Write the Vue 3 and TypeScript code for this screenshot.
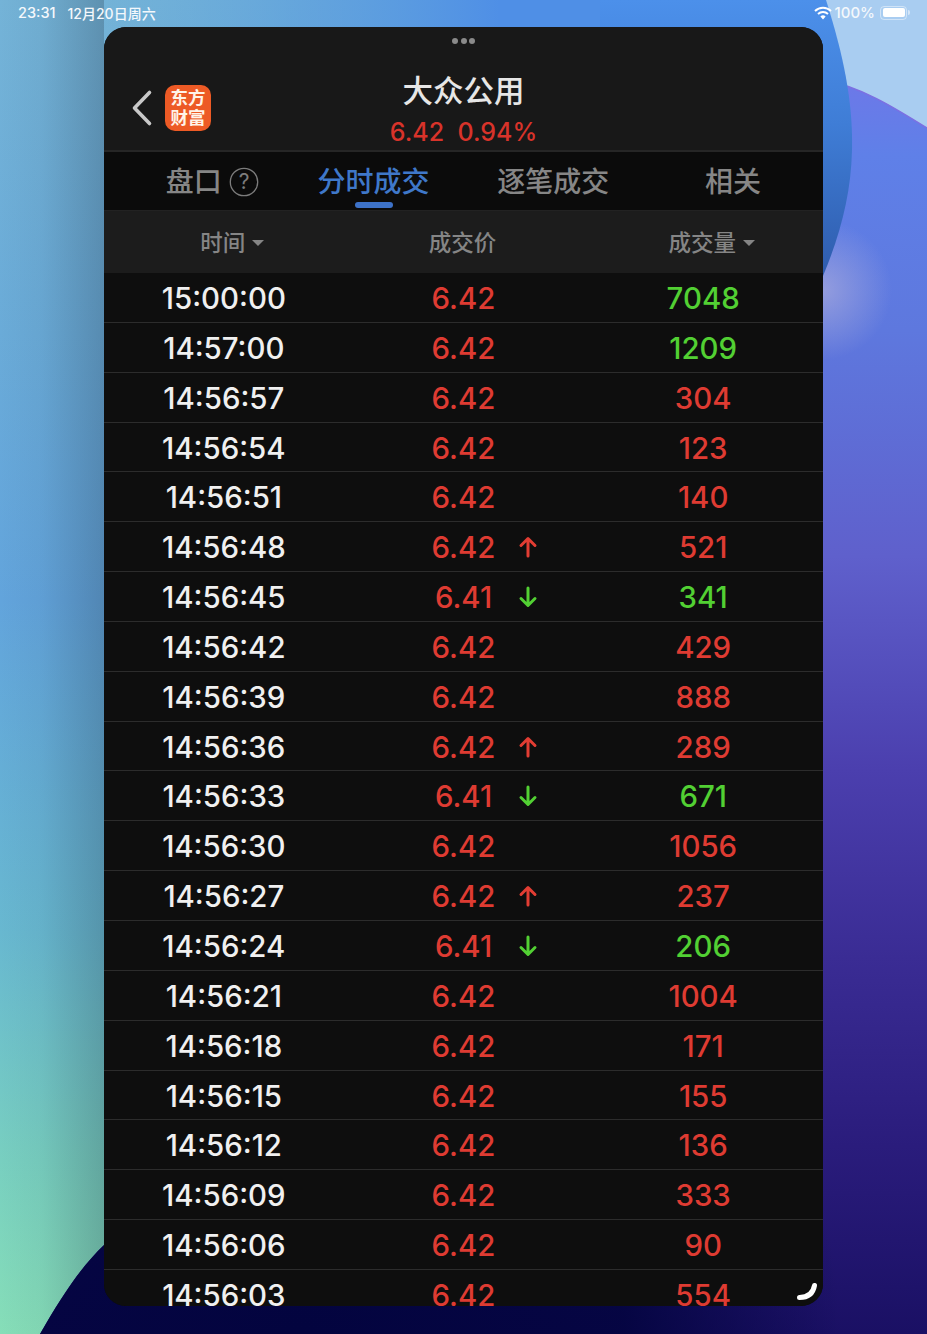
<script setup lang="ts">
type Dir = "up" | "down" | null;
type Trade = { time: string; price: string; vol: string; green?: boolean; dir?: Dir };

const tabs = ["盘口", "分时成交", "逐笔成交", "相关"];

const trades: Trade[] = [
  { time: "15:00:00", price: "6.42", vol: "7048", green: true },
  { time: "14:57:00", price: "6.42", vol: "1209", green: true },
  { time: "14:56:57", price: "6.42", vol: "304" },
  { time: "14:56:54", price: "6.42", vol: "123" },
  { time: "14:56:51", price: "6.42", vol: "140" },
  { time: "14:56:48", price: "6.42", vol: "521", dir: "up" },
  { time: "14:56:45", price: "6.41", vol: "341", green: true, dir: "down" },
  { time: "14:56:42", price: "6.42", vol: "429" },
  { time: "14:56:39", price: "6.42", vol: "888" },
  { time: "14:56:36", price: "6.42", vol: "289", dir: "up" },
  { time: "14:56:33", price: "6.41", vol: "671", green: true, dir: "down" },
  { time: "14:56:30", price: "6.42", vol: "1056" },
  { time: "14:56:27", price: "6.42", vol: "237", dir: "up" },
  { time: "14:56:24", price: "6.41", vol: "206", green: true, dir: "down" },
  { time: "14:56:21", price: "6.42", vol: "1004" },
  { time: "14:56:18", price: "6.42", vol: "171" },
  { time: "14:56:15", price: "6.42", vol: "155" },
  { time: "14:56:12", price: "6.42", vol: "136" },
  { time: "14:56:09", price: "6.42", vol: "333" },
  { time: "14:56:06", price: "6.42", vol: "90" },
  { time: "14:56:03", price: "6.42", vol: "554" },
];
</script>

<template>
  <div class="page">
    <svg class="wallpaper" viewBox="0 0 927 1334" preserveAspectRatio="none" aria-hidden="true">
      <defs>
        <linearGradient id="left" x1="0" y1="0" x2="0" y2="1">
          <stop offset="0" stop-color="#74b3d7" />
          <stop offset="0.25" stop-color="#6aabd8" />
          <stop offset="0.45" stop-color="#62a4dc" />
          <stop offset="0.7" stop-color="#68b8d0" />
          <stop offset="0.87" stop-color="#78cfc0" />
          <stop offset="1" stop-color="#86deb8" />
        </linearGradient>
        <linearGradient id="shade" x1="0" y1="0" x2="1" y2="0">
          <stop offset="0" stop-color="#203040" stop-opacity="0" />
          <stop offset="0.4" stop-color="#203040" stop-opacity="0.05" />
          <stop offset="1" stop-color="#203040" stop-opacity="0.26" />
        </linearGradient>
        <linearGradient id="top" x1="0" y1="0" x2="1" y2="0">
          <stop offset="0" stop-color="#5a9fdc" stop-opacity="0" />
          <stop offset="1" stop-color="#4f8fe6" />
        </linearGradient>
        <linearGradient id="disc" x1="0" y1="0" x2="0" y2="1">
          <stop offset="0" stop-color="#4c90ea" />
          <stop offset="0.45" stop-color="#3f7dd6" />
          <stop offset="1" stop-color="#2f5cad" />
        </linearGradient>
        <linearGradient id="dark" x1="0" y1="0" x2="0" y2="1">
          <stop offset="0" stop-color="#6d78e8" />
          <stop offset="0.06" stop-color="#5f80e8" />
          <stop offset="0.2" stop-color="#5e78de" />
          <stop offset="0.38" stop-color="#5f60cc" />
          <stop offset="0.55" stop-color="#4b3fae" />
          <stop offset="0.7" stop-color="#3a2c94" />
          <stop offset="0.85" stop-color="#2a1c7c" />
          <stop offset="1" stop-color="#1a1064" />
        </linearGradient>
        <radialGradient id="navy" gradientUnits="userSpaceOnUse" cx="300" cy="1334" r="540">
          <stop offset="0" stop-color="#03043f" />
          <stop offset="0.6" stop-color="#03043f" stop-opacity="0.9" />
          <stop offset="1" stop-color="#03043f" stop-opacity="0" />
        </radialGradient>
        <radialGradient id="glow" gradientUnits="userSpaceOnUse" cx="822" cy="290" r="70">
          <stop offset="0" stop-color="#b8b4dc" stop-opacity="0.6" />
          <stop offset="1" stop-color="#b8b4dc" stop-opacity="0" />
        </radialGradient>
      </defs>
      <rect width="927" height="1334" fill="url(#left)" />
      <rect width="104" height="1334" fill="url(#shade)" />
      <rect x="100" width="400" height="27" fill="url(#top)" />
      <rect x="500" width="427" height="300" fill="#4f8fe6" />
      <rect x="700" width="227" height="300" fill="#a9cdf1" />
      <path d="M40 1334 C62 1296 80 1268 104 1245 L104 700 C300 200 600 80 823 80 C860 86 895 108 927 128 V1334 Z" fill="url(#dark)" />
      <path d="M40 1334 C62 1296 80 1268 104 1245 L104 700 C300 200 600 80 823 80 C860 86 895 108 927 128 V1334 Z" fill="url(#navy)" />
      <path d="M823 80 C860 86 895 108 927 128" fill="none" stroke="#7c70e2" stroke-width="1.5" />
      <rect x="752" y="220" width="175" height="140" fill="url(#glow)" />
      <path d="M600 0 H826 C845 60 853 105 852 150 C851 195 840 235 823 276 L600 276 Z" fill="url(#disc)" />
    </svg>

    <div class="status">
      <span class="clock">23:31</span>
      <span class="date">12月20日周六</span>
      <span class="status-right">
        <svg class="wifi" width="18" height="14" viewBox="0 0 18 14">
          <path d="M1 5 A11.5 11.5 0 0 1 17 5" fill="none" stroke="#fff" stroke-width="2" />
          <path d="M4 8 A7.5 7.5 0 0 1 14 8" fill="none" stroke="#fff" stroke-width="2" />
          <path d="M9 13.5 L6.4 10.6 A3.6 3.6 0 0 1 11.6 10.6 Z" fill="#fff" />
        </svg>
        <span>100%</span>
        <span class="battery"><i></i></span>
        <span class="nub"></span>
      </span>
    </div>

    <div class="sheet">
      <div class="header">
        <div class="dots"><i></i><i></i><i></i></div>
        <svg class="back" width="24" height="38" viewBox="0 0 24 38">
          <path d="M19.5 3.5 L4.5 19 L19.5 34.5" fill="none" stroke="#c8c8c8" stroke-width="3.6" stroke-linecap="round" stroke-linejoin="round" />
        </svg>
        <div class="logo">东方<br />财富</div>
        <div class="title">大众公用</div>
        <div class="sub">6.42&nbsp;&nbsp;0.94%</div>
      </div>

      <div class="tabs">
        <div v-for="(t, i) in tabs" :key="t" class="tab" :class="{ active: i === 1 }">
          <span class="tab-text">
            {{ t }}
            <svg v-if="i === 0" class="help" width="30" height="30" viewBox="0 0 30 30">
              <circle cx="15" cy="15" r="13.7" fill="none" stroke="#7c7c7c" stroke-width="1.3" />
              <text x="15" y="22" text-anchor="middle" class="help-mark">?</text>
            </svg>
          </span>
          <i v-if="i === 1" class="bar"></i>
        </div>
      </div>

      <div class="cols">
        <div class="col"><span class="col-text">时间<i class="caret"></i></span></div>
        <div class="col"><span class="col-text">成交价</span></div>
        <div class="col"><span class="col-text">成交量<i class="caret"></i></span></div>
      </div>

      <div class="rows">
        <div v-for="t in trades" :key="t.time" class="row">
          <div class="cell time">{{ t.time }}</div>
          <div class="cell price">
            {{ t.price }}
            <svg v-if="t.dir" class="arrow" width="20" height="22" viewBox="0 0 20 22">
              <path
                v-if="t.dir === 'up'"
                d="M10 20 V3 M3 9.5 L10 2.5 L17 9.5"
                fill="none"
                stroke="#e23d33"
                stroke-width="3"
                stroke-linecap="round"
                stroke-linejoin="round"
              />
              <path
                v-else
                d="M10 2 V19 M3 12.5 L10 19.5 L17 12.5"
                fill="none"
                stroke="#52d033"
                stroke-width="3"
                stroke-linecap="round"
                stroke-linejoin="round"
              />
            </svg>
          </div>
          <div class="cell vol" :class="{ green: t.green }">{{ t.vol }}</div>
        </div>
      </div>

      <svg class="corner" width="24" height="22" viewBox="0 0 24 22">
        <path d="M3.5 16.5 C11 16.5 17 13 18.5 4.5" fill="none" stroke="#fff" stroke-width="5" stroke-linecap="round" />
      </svg>
    </div>
  </div>
</template>

<style>
html,
body {
  margin: 0;
  background: #1a1064;
}
</style>

<style scoped>
.page {
  position: relative;
  width: 927px;
  height: 1334px;
  overflow: hidden;
  font-family: Inter, "Noto Sans CJK SC", sans-serif;
}
.wallpaper {
  position: absolute;
  inset: 0;
  width: 927px;
  height: 1334px;
}
.status {
  position: relative;
  height: 27px;
  display: flex;
  align-items: center;
  padding: 0 17px 2px 18px;
  box-sizing: border-box;
  color: #f4f8fc;
  font-size: 14.5px;
  font-weight: 500;
}
.date {
  margin-left: 12px;
  font-size: 14px;
}
.status-right {
  margin-left: auto;
  display: flex;
  align-items: center;
  gap: 3px;
  font-size: 15px;
}
.battery {
  width: 27px;
  height: 14px;
  margin-left: 2px;
  padding: 1.5px;
  box-sizing: border-box;
  border: 1px solid rgba(255, 255, 255, 0.45);
  border-radius: 4px;
  display: block;
}
.battery i {
  display: block;
  height: 100%;
  background: #fff;
  border-radius: 2px;
}
.nub {
  width: 2px;
  height: 5px;
  margin-left: -2px;
  border-radius: 0 2px 2px 0;
  background: rgba(255, 255, 255, 0.5);
}
.sheet {
  position: relative;
  width: 719px;
  height: 1279px;
  margin-left: 104px;
  overflow: hidden;
  border-radius: 22px;
  background: #0e0e0e;
}
.header {
  position: relative;
  height: 125px;
  box-sizing: border-box;
  background: #181818;
  border-bottom: 2px solid #262626;
  display: flex;
  flex-direction: column;
  align-items: center;
  padding-top: 44px;
}
.dots {
  position: absolute;
  top: 11px;
  display: flex;
  gap: 2.5px;
}
.dots i {
  width: 6px;
  height: 6px;
  border-radius: 50%;
  background: #8a8a8a;
}
.back {
  position: absolute;
  left: 26px;
  top: 62px;
}
.logo {
  position: absolute;
  left: 61px;
  top: 58px;
  width: 46px;
  height: 46px;
  border-radius: 10px;
  background: #ed5a25;
  color: #fff3e8;
  font-size: 17.5px;
  font-weight: 700;
  line-height: 20px;
  text-align: center;
  box-sizing: border-box;
  padding-top: 3px;
}
.title {
  color: #e6e6e6;
  font-size: 30.5px;
  line-height: 40px;
  font-weight: 500;
}
.sub {
  margin-top: 7px;
  color: #d8332a;
  font-size: 25px;
  line-height: 28px;
  font-weight: 500;
}
.tabs {
  height: 59px;
  box-sizing: border-box;
  display: grid;
  grid-template-columns: repeat(4, 1fr);
  background: #0b0b0b;
  border-bottom: 1px solid #222;
}
.tab {
  position: relative;
  display: flex;
  justify-content: center;
  padding-top: 10px;
  color: #868686;
  font-size: 28px;
  line-height: 40px;
  font-weight: 500;
}
.tab-text {
  position: relative;
}
.active {
  color: #3f78c9;
}
.help {
  position: absolute;
  left: 63px;
  top: 5px;
}
.help-mark {
  font-size: 21px;
  font-weight: 400;
  fill: #7c7c7c;
}
.bar {
  position: absolute;
  top: 50px;
  left: 50%;
  width: 38px;
  height: 6px;
  margin-left: -19px;
  border-radius: 3px;
  background: #3d72c8;
}
.cols {
  height: 62px;
  box-sizing: border-box;
  padding-bottom: 2px;
  display: grid;
  grid-template-columns: repeat(3, 1fr);
  align-items: center;
  background: #1c1c1c;
  color: #858585;
  font-size: 22.5px;
  font-weight: 500;
}
.col {
  text-align: center;
  padding-right: 2px;
}
.col-text {
  position: relative;
}
.caret {
  position: absolute;
  right: -19px;
  top: 50%;
  margin-top: -3px;
  border-left: 6px solid transparent;
  border-right: 6px solid transparent;
  border-top: 6px solid #858585;
}
.row {
  height: 49.85px;
  box-sizing: border-box;
  display: grid;
  grid-template-columns: repeat(3, 1fr);
  align-items: center;
  border-bottom: 1px solid #2c2c2c;
  background: #0e0e0e;
  font-size: 29.4px;
  font-weight: 500;
}
.cell {
  text-align: center;
  line-height: 49px;
  padding-top: 1px;
}
.time {
  color: #f0f0f0;
}
.price,
.vol {
  color: #de3b32;
}
.vol.green {
  color: #52d033;
}
.price {
  position: relative;
}
.arrow {
  position: absolute;
  left: calc(50% + 55px);
  top: 14px;
}
.corner {
  position: absolute;
  right: 3px;
  bottom: 3px;
}
</style>
